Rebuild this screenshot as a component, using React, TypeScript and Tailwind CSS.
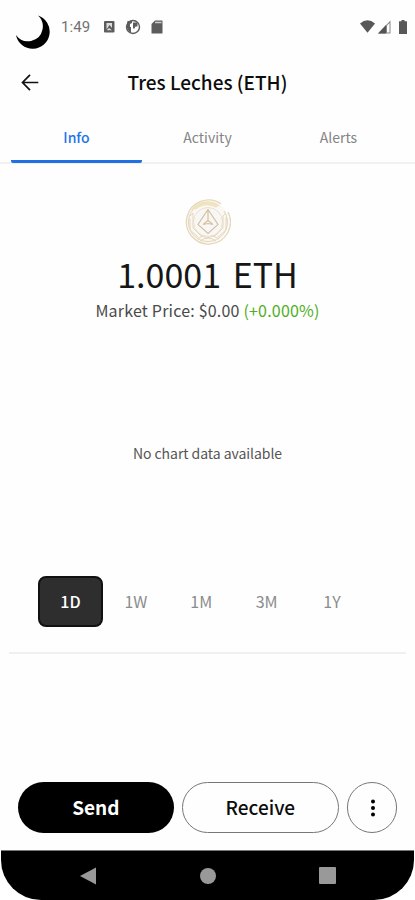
import clsx from "clsx";

const tabs = ["Info", "Activity", "Alerts"];
const ranges = ["1D", "1W", "1M", "3M", "1Y"];

const StatusBar = () => (
  <div className="flex h-[54px] shrink-0 items-start">
    <svg className="ml-[14px] mt-[14px] h-9 w-9" viewBox="0 0 36 36">
      <path d="M24 1.600A17 17 0 1 1 2 21A14.750 14.750 0 0 0 28.500 15.500A14.750 14.750 0 0 0 24 1.600Z" fill="#000" />
    </svg>
    <span className="ml-[11px] mt-[17px] w-[30px] whitespace-nowrap font-[Roboto] text-[15px] leading-5 tracking-[0.1px] text-[#727272]">
      1:49
    </span>
    <svg className="ml-[13px] mt-[21px] h-3 w-[11px]" viewBox="0 0 11 12">
      <rect width="10.500" height="11.500" rx="1" fill="#5c5c5c" />
      <path d="M2.500 2H8V7L6.800 5.500L5.300 4L4 6.500L2.500 8Z" fill="#ddd" />
      <path d="M2.500 9.200L5 7L8 9.200Z" fill="#ddd" />
    </svg>
    <svg className="ml-[10px] mt-[19px] h-4 w-4" viewBox="0 0 16 16">
      <circle cx="8" cy="8" r="6.500" fill="none" stroke="#5c5c5c" strokeWidth="1.400" />
      <path d="M7 2H2.500L1.500 8L4 12.500L6 13.500V8H5V5L7 4Z" fill="#5c5c5c" />
      <path d="M8 3.500H12.500V7.500H10.500L9.500 9.500H8Z" fill="#5c5c5c" />
    </svg>
    <svg className="ml-[10px] mt-[20px] h-[14px] w-3" viewBox="0 0 12 14">
      <path d="M4 0.500H11Q11.500 0.500 11.500 1V13Q11.500 13.500 11 13.500H1Q0.500 13.500 0.500 13V4Z" fill="#5c5c5c" />
      <path d="M4 2.500H10.500" stroke="#ccc" strokeWidth="1.500" />
    </svg>
    <svg className="ml-auto mt-[20px] h-[13px] w-[15px]" viewBox="0 0 15 13">
      <path d="M0 3.500Q7.500 -3 15 3.500L7.500 12.800Z" fill="#585858" />
    </svg>
    <svg className="ml-[3px] mt-[20px] h-[14px] w-[13px]" viewBox="0 0 13 14">
      <path d="M0 13.500L12.500 0.500V13.500Z" fill="#858585" />
      <path d="M0 13.500L8 5V13.500Z" fill="#555" />
      <path d="M9 5.500L11.500 3V12.500H9Z" fill="#fff" />
    </svg>
    <svg className="ml-[8px] mr-[8px] mt-[20px] h-[14px] w-2" viewBox="0 0 8 14">
      <path d="M2.500 0H5.500V1.300H8V14H0V1.300H2.500Z" fill="#585858" />
    </svg>
  </div>
);

const Header = () => (
  <header className="grid h-[56px] shrink-0 grid-cols-[60px_1fr_60px] items-center">
    <svg className="ml-[21px] h-[18px] w-[18px]" viewBox="0 0 18 18" fill="none" stroke="#111" strokeWidth="1.700">
      <path d="M17.300 9.500H1.500M9 1.800L1.500 9.500L9 17.200" />
    </svg>
    <h1 className="-mt-px text-center text-[19px] font-medium leading-7 text-[#0c0c0c]">
      Tres Leches (ETH)
    </h1>
  </header>
);

const Tabs = () => (
  <nav className="grid h-[54px] shrink-0 grid-cols-3 border-b-2 border-[#f1f1f1] px-[11px]">
    {tabs.map((tab, i) => (
      <button
        key={tab}
        className={clsx(
          "-mb-px flex items-center justify-center border-b-[3px] pt-[3px] text-sm leading-5",
          i === 0
            ? "rounded-b-[2px] border-[#1f6fe5] font-medium text-[#2474ea]"
            : "border-transparent text-[#858585]",
        )}
      >
        {tab}
      </button>
    ))}
  </nav>
);

const TokenIcon = () => (
  <svg className="h-[46px] w-[46px]" viewBox="0 0 46 46" fill="none" stroke="#e6d6ba">
    <circle cx="23" cy="23" r="21" fill="#faf8f5" stroke="none" />
    <path d="M36 5A22 22 0 1 0 43 13" strokeWidth="1.300" />
    <path d="M34 7A19.500 19.500 0 1 0 39 12" strokeWidth="1" />
    <path d="M7 11A20 20 0 0 1 33 6M10 10A18 18 0 0 1 32 8" stroke="#eee3bd" strokeWidth="2" />
    <path d="M5 17L8 14L8 29L15 36L22 39L31 36L38 29V17L41 14M3 22L5 20V31L13 38M43 21L41 19V31L33 38" />
    <path d="M12 40Q23 32 34 40M15 42Q23 36 31 42" />
    <circle cx="23" cy="23" r="14.500" fill="#f8f7f8" strokeWidth="0.700" />
    <path d="M23 10.500L33 25.500L23 34.500L13 25.500ZM23 10.500V21.500M23 21.500L18 25.500M23 21.500L28 25.500M18 25.500L23 24.500L28 25.500" stroke="#d8c09a" strokeWidth="1.200" />
  </svg>
);

const Summary = () => (
  <section className="flex h-[164px] shrink-0 flex-col items-center pt-[35px]">
    <TokenIcon />
    <p className="mt-[6px] whitespace-nowrap text-[34px] leading-[46px] text-[#161616] [word-spacing:4px]">
      1.0001 ETH
    </p>
    <p className="mt-px whitespace-nowrap text-base leading-6 tracking-[0.2px] text-[#4a4a4a]">
      Market Price: $0.00 <span className="text-[#4fae24]">(+0.000%)</span>
    </p>
  </section>
);

const RangePicker = () => (
  <div className="mx-[38px] grid h-[52px] shrink-0 grid-cols-[repeat(5,65.400px)] pt-px">
    {ranges.map((range, i) => (
      <button
        key={range}
        className={clsx(
          "h-[51px] w-[65px] pb-px text-base leading-6",
          i === 0
            ? "rounded-[8px] border-2 border-[#111] bg-[#2e2e2e] font-medium text-white"
            : "text-[#8c8c8c]",
        )}
      >
        {range}
      </button>
    ))}
  </div>
);

const Actions = () => (
  <div className="flex h-[51px] shrink-0 gap-[8px] px-[17.500px] text-[19px] leading-7">
    <button className="w-[157px] rounded-full bg-black pb-px font-bold text-white">
      Send
    </button>
    <button className="w-[157px] rounded-full border border-[#777] pb-px font-medium text-[#0c0c0c]">
      Receive
    </button>
    <button className="flex w-[51px] items-center justify-center rounded-full border border-[#777] pl-px">
      <svg className="h-5 w-1" viewBox="0 0 4 20">
        <circle cx="2" cy="3.500" r="2" />
        <circle cx="2" cy="10" r="2" />
        <circle cx="2" cy="16.500" r="2" />
      </svg>
    </button>
  </div>
);

const NavBar = () => (
  <div className="h-[50px] shrink-0 bg-white px-px">
    <div className="grid h-full grid-cols-[174px_65px_174px] items-center justify-items-center rounded-b-[40px] border-t border-[#777] bg-black">
      <svg className="h-[18px] w-4" viewBox="0 0 16 18">
        <path d="M0 9L16 0.500V17.500Z" fill="#999" />
      </svg>
      <div className="h-4 w-4 rounded-full bg-[#999]" />
      <div className="h-[17px] w-[17px] rounded-[1px] bg-[#999]" />
    </div>
  </div>
);

export default function App() {
  return (
    <div className="flex h-[900px] w-[415px] flex-col overflow-hidden bg-[#fefefe] font-['Noto_Sans_CJK_SC','Noto_Sans',sans-serif]">
      <StatusBar />
      <Header />
      <Tabs />
      <Summary />
      <div className="flex h-[247px] shrink-0 items-center justify-center pt-[2px] text-sm leading-5 tracking-[-0.050px] text-[#555]">
        No chart data available
      </div>
      <RangePicker />
      <div className="mx-[9px] mt-[25px] h-[2px] shrink-0 bg-[#f0f0f0]" />
      <div className="flex-1" />
      <Actions />
      <div className="h-[17px] shrink-0" />
      <NavBar />
    </div>
  );
}
